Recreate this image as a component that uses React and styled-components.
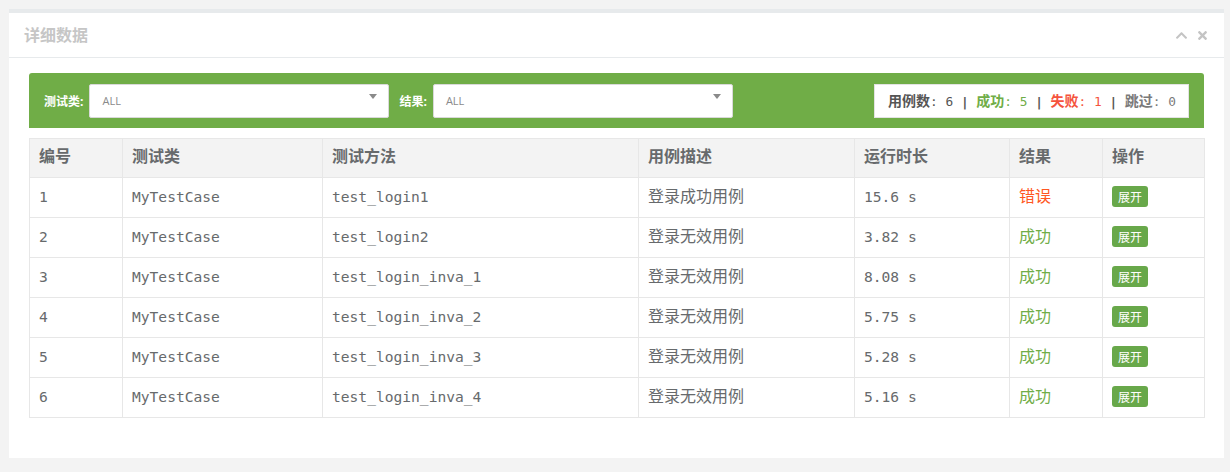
import styled, { createGlobalStyle } from "styled-components";
import { FaChevronUp, FaTimes } from "react-icons/fa";

const GlobalStyle = createGlobalStyle`
    body {
        margin: 0;
        padding: 9px 6px 14px 9px;
        background: #f3f3f3;
        font-family: "Open Sans", "Noto Sans CJK SC", sans-serif;
        color: #676a6c;
    }
`;

const cases = [
    { id: 1, cls: "MyTestCase", method: "test_login1", desc: "登录成功用例", time: "15.6 s", ok: false },
    { id: 2, cls: "MyTestCase", method: "test_login2", desc: "登录无效用例", time: "3.82 s", ok: true },
    { id: 3, cls: "MyTestCase", method: "test_login_inva_1", desc: "登录无效用例", time: "8.08 s", ok: true },
    { id: 4, cls: "MyTestCase", method: "test_login_inva_2", desc: "登录无效用例", time: "5.75 s", ok: true },
    { id: 5, cls: "MyTestCase", method: "test_login_inva_3", desc: "登录无效用例", time: "5.28 s", ok: true },
    { id: 6, cls: "MyTestCase", method: "test_login_inva_4", desc: "登录无效用例", time: "5.16 s", ok: true },
];

const columns = [
    { title: "编号", width: 93 },
    { title: "测试类", width: 200 },
    { title: "测试方法", width: 316 },
    { title: "用例描述", width: 216 },
    { title: "运行时长", width: 155 },
    { title: "结果", width: 93 },
    { title: "操作", width: 102 },
];

const stats = [
    { label: "用例数", value: 6 },
    { label: "成功", value: 5, color: "#70ad47" },
    { label: "失败", value: 1, color: "#f5533d" },
    { label: "跳过", value: 0, color: "#7a7a7a" },
];

const Select = ({ label }) => (
    <Field>
        <FieldLabel>{label}:</FieldLabel>
        <SelectBox>
            <span>ALL</span>
            <Caret />
        </SelectBox>
    </Field>
);

const App = () => {
    return (
        <>
            <GlobalStyle />
            <Panel>
                <PanelHeader>
                    <Title>详细数据</Title>
                    <Tools>
                        <FaChevronUp />
                        <FaTimes />
                    </Tools>
                </PanelHeader>
                <PanelBody>
                    <FilterBar>
                        <Select label="测试类" />
                        <Select label="结果" />
                        <Summary>
                            {stats.map((s, i) => (
                                <Stat key={s.label} color={s.color}>
                                    {s.label}<Num>: {s.value}</Num>
                                    {i < stats.length - 1 && <Sep> | </Sep>}
                                </Stat>
                            ))}
                        </Summary>
                    </FilterBar>
                    <Table>
                        <colgroup>
                            {columns.map(c => <col key={c.title} style={{ width: c.width }} />)}
                        </colgroup>
                        <thead>
                            <tr>
                                {columns.map(c => <Th key={c.title}>{c.title}</Th>)}
                            </tr>
                        </thead>
                        <tbody>
                            {cases.map(row => (
                                <tr key={row.id}>
                                    <Td mono>{row.id}</Td>
                                    <Td mono>{row.cls}</Td>
                                    <Td mono>{row.method}</Td>
                                    <Td>{row.desc}</Td>
                                    <Td mono>{row.time}</Td>
                                    <Td color={row.ok ? "#70ad47" : "#ff5722"}>{row.ok ? "成功" : "错误"}</Td>
                                    <ActionTd><ExpandButton>展开</ExpandButton></ActionTd>
                                </tr>
                            ))}
                        </tbody>
                    </Table>
                </PanelBody>
            </Panel>
        </>
    );
};

const Panel = styled.div`
    background: #fff;
    border-top: 4px solid #e7eaec;
`;

const PanelHeader = styled.div`
    height: 44px;
    border-bottom: 1px solid #e7eaec;
    display: flex;
    align-items: center;
    justify-content: space-between;
    padding: 0 15px;
`;

const Title = styled.h5`
    margin: 0 0 3px;
    font-size: 16px;
    font-weight: bold;
    color: #c6c6c6;
`;

const Tools = styled.div`
    display: flex;
    align-items: center;
    gap: 8px;
    color: #c4c4c4;
    font-size: 13px;
    margin-top: 1px;
`;

const PanelBody = styled.div`
    padding: 15px 20px 40px;
`;

const FilterBar = styled.div`
    background: #70ad47;
    border-radius: 3px 3px 0 0;
    height: 55px;
    padding: 0 15px;
    display: flex;
    align-items: center;
    gap: 10px;
`;

const Field = styled.div`
    display: flex;
    align-items: center;
`;

const FieldLabel = styled.label`
    color: #fff;
    font-size: 12px;
    font-weight: bold;
    margin-right: 6px;
`;

const SelectBox = styled.div`
    width: 300px;
    height: 34px;
    box-sizing: border-box;
    background: #fff;
    border: 1px solid #d9d9d9;
    border-radius: 2px;
    padding: 0 11px 0 12px;
    display: flex;
    align-items: center;
    justify-content: space-between;
    font-size: 11px;
    color: #8a8a8a;
`;

const Caret = styled.i`
    width: 0;
    height: 0;
    border-left: 4px solid transparent;
    border-right: 4px solid transparent;
    border-top: 5px solid #8a8a8a;
    margin-top: -9px;
`;

const Summary = styled.div`
    margin-left: auto;
    height: 34px;
    box-sizing: border-box;
    background: #fff;
    border: 1px solid #e3e3e3;
    padding: 0 12px 2px 13px;
    display: flex;
    align-items: center;
    font-size: 14px;
    font-weight: bold;
    white-space: pre;
`;

const Stat = styled.span`
    color: ${props => props.color || "#555"};
`;

const Num = styled.span`
    font-family: "DejaVu Sans Mono", monospace;
    font-weight: normal;
    font-size: 12.8px;
`;

const Sep = styled.span`
    color: #555;
    font-family: "DejaVu Sans Mono", monospace;
    font-size: 12.8px;
`;

const Table = styled.table`
    margin-top: 10px;
    width: 100%;
    table-layout: fixed;
    border-collapse: collapse;
    border: 1px solid #e7e7e7;
`;

const Th = styled.th`
    background: #f3f3f3;
    border: 1px solid #e7e7e7;
    text-align: left;
    line-height: 20px;
    padding: 7px 8px 11px 9px;
    font-size: 16px;
    font-weight: bold;
    color: #676a6c;
`;

const Td = styled.td`
    border: 1px solid #e7e7e7;
    line-height: 20px;
    padding: ${props => props.mono ? "9px 8px 10px 9px" : "8px 8px 11px 9px"};
    font-family: ${props => props.mono ? '"DejaVu Sans Mono", monospace' : '"Open Sans", "Noto Sans CJK SC", sans-serif'};
    font-size: ${props => props.mono ? "14.6px" : "16px"};
    color: ${props => props.color || "#676a6c"};
`;

const ActionTd = styled.td`
    border: 1px solid #e7e7e7;
    padding: 8px 8px 10px 9px;
`;

const ExpandButton = styled.button`
    display: block;
    border: none;
    background: #68a84a;
    color: #fff;
    border-radius: 3px;
    font-family: "Noto Sans CJK SC", sans-serif;
    font-size: 12px;
    padding: 0 6px;
    height: 21px;
    line-height: 21px;
    cursor: pointer;
`;

export default App;
